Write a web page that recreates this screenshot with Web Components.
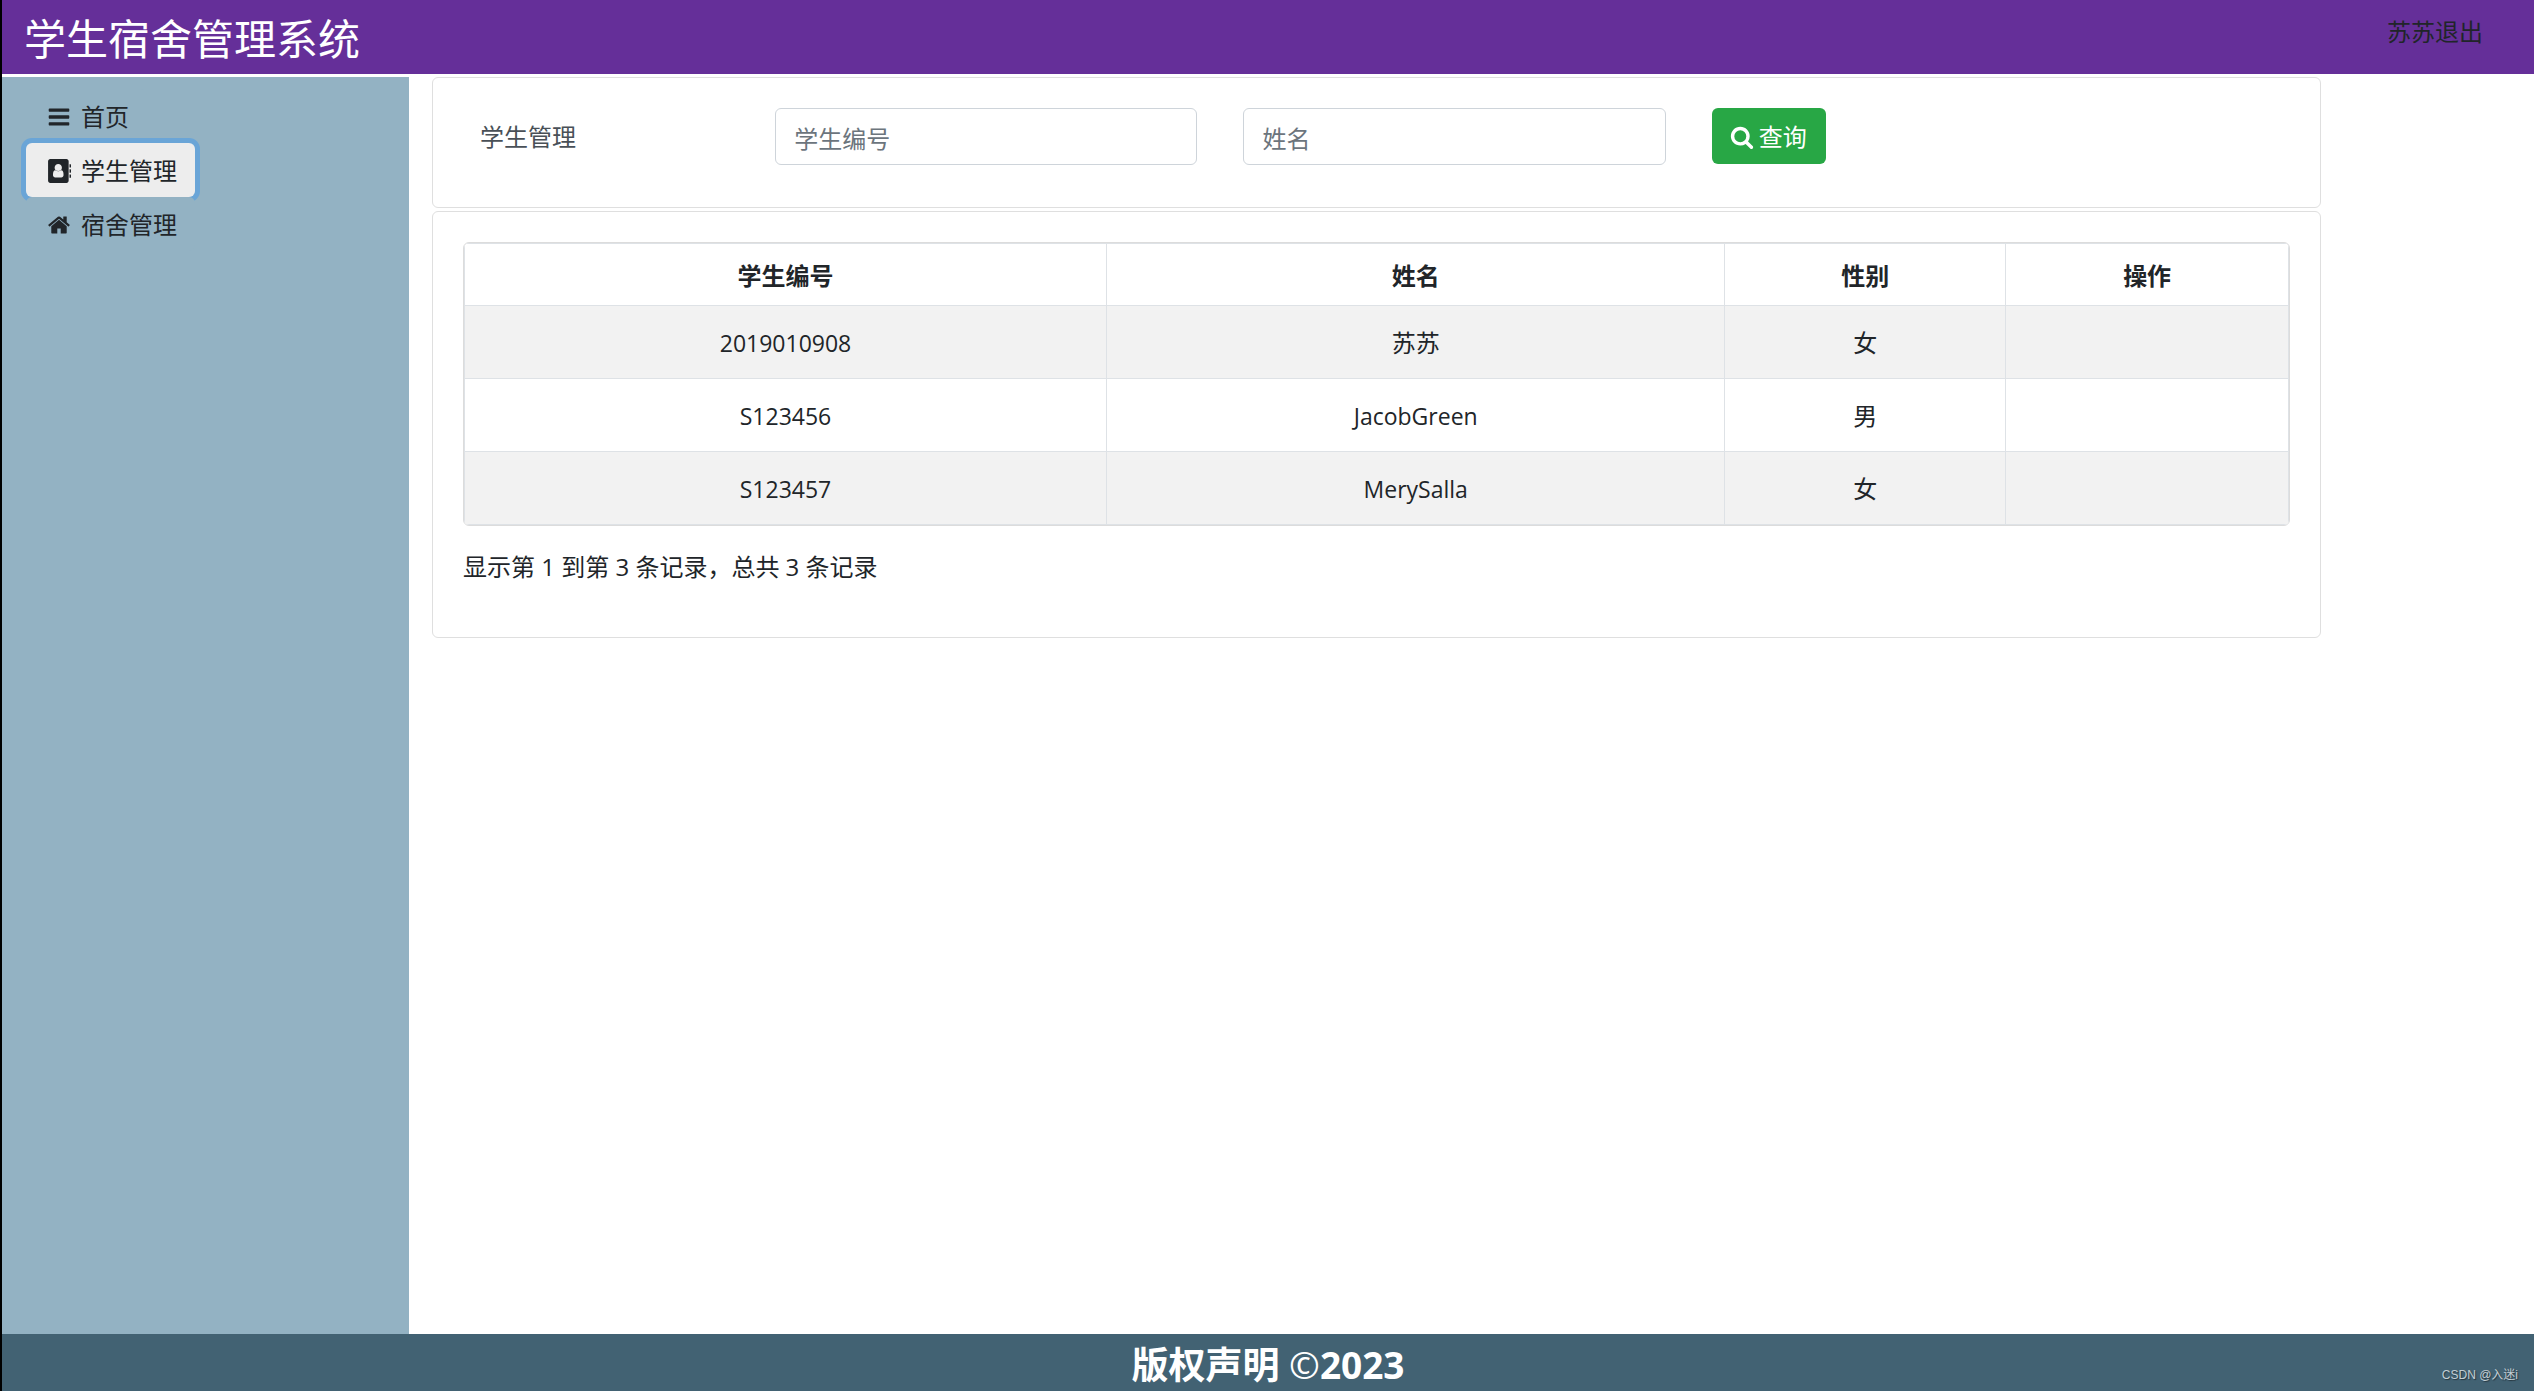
<!DOCTYPE html>
<html lang="zh-CN">
<head>
<meta charset="utf-8">
<title>学生宿舍管理系统</title>
<style>
  html, body { height: 100%; }
  body {
    margin: 0;
    box-sizing: border-box;
    border-left: 2px solid #000;
    font: 400 24px/36px "Open Sans", "Noto Sans CJK SC", sans-serif;
    color: #212529;
    background: #fff;
  }
</style>
</head>
<body>
<dorm-app></dorm-app>

<script>
const define = (name, html, init) => {
  const template = document.createElement('template');
  template.innerHTML = html;
  customElements.define(name, class extends HTMLElement {
    constructor() {
      super();
      this.attachShadow({ mode: 'open' }).append(template.content.cloneNode(true));
    }
    connectedCallback() { if (init) init(this, this.shadowRoot); }
  });
};

const icons = {
  bars: 'M1664 1344v128q0 26-19 45t-45 19h-1408q-26 0-45-19t-19-45v-128q0-26 19-45t45-19h1408q26 0 45 19t19 45zm0-512v128q0 26-19 45t-45 19h-1408q-26 0-45-19t-19-45v-128q0-26 19-45t45-19h1408q26 0 45 19t19 45zm0-512v128q0 26-19 45t-45 19h-1408q-26 0-45-19t-19-45v-128q0-26 19-45t45-19h1408q26 0 45 19t19 45z',
  book: 'M240 0h1216q66 0 113 47t47 113v1472q0 66-47 113t-113 47h-1216q-66 0-113-47t-47-113v-1472q0-66 47-113t113-47zM1235 1196q0-110-16-187t-64-130-124-53q-80 78-190 78t-190-78q-76 0-124 53t-64 130-16 187q0 86 49 136t118 50h454q69 0 118-50t49-136zM1113 648q0-113-80-193t-192-80-192 80-80 193 80 192 192 80 192-80 80-192zM1680 384h80q32 0 32 32v192q0 32-32 32h-80zM1680 768h80q32 0 32 32v192q0 32-32 32h-80zM1680 1152h80q32 0 32 32v192q0 32-32 32h-80z',
  home: 'M1472 992v480q0 26-19 45t-45 19h-384v-384h-256v384h-384q-26 0-45-19t-19-45v-480q0-1 .5-3t.5-3l575-474 575 474q1 2 1 6zm223-69l-62 74q-8 9-21 11h-3q-13 0-21-7l-692-577-692 577q-12 8-24 7-13-2-21-11l-62-74q-8-10-7-23.5t11-21.5l719-599q32-26 76-26t76 26l244 204v-195q0-14 9-23t23-9h192q14 0 23 9t9 23v408l219 182q10 8 11 21.5t-7 23.5z',
  search: 'M1216 832q0-185-131.5-316.5t-316.5-131.5-316.5 131.5-131.5 316.5 131.5 316.5 316.5 131.5 316.5-131.5 131.5-316.5zm512 832q0 52-38 90t-90 38q-54 0-90-38l-343-342q-179 124-399 124-143 0-273.5-55.5t-225-150-150-225-55.5-273.5 55.5-273.5 150-225 225-150 273.5-55.5 273.5 55.5 225 150 150 225 55.5 273.5q0 220-124 399l343 343q37 37 37 90z'
};

define('dorm-icon', `
  <style>
    :host { display: block; width: 24px; height: 24px; }
    svg { display: block; width: 100%; height: 100%; fill: currentColor; }
  </style>
  <svg viewBox="0 0 1792 1792" aria-hidden="true"><path fill-rule="evenodd"/></svg>`,
  (host, root) => {
    if (host.hasAttribute('name')) root.querySelector('path').setAttribute('d', icons[host.getAttribute('name')]);
  });

define('dorm-header', `
  <style>
    :host { display: flex; justify-content: space-between; align-items: flex-start;
      height: 74px; padding: 0 51px 0 22px; background: #652f99; }
    h1 { margin: 0; font-size: 42px; font-weight: inherit; line-height: 78px; color: #fff; }
    a { color: inherit; text-decoration: none; line-height: 64px; }
  </style>
  <h1><slot></slot></h1>
  <a href="#logout"><slot name="user"></slot></a>`);

define('dorm-nav-item', `
  <style>
    :host { display: block; }
    button { display: flex; align-items: center; gap: 10px; height: 54px; padding: 2px 18px 0 21px;
      border: 0; border-radius: 6px; background: #93b2c3; color: inherit; font: inherit; cursor: pointer; }
    :host([active]) button { background: #ededed; box-shadow: 0 0 0 5px #6aa5d7; }
  </style>
  <button type="button"><dorm-icon></dorm-icon><span><slot></slot></span></button>`,
  (host, root) => {
    const icon = root.querySelector('dorm-icon');
    icon.setAttribute('name', host.getAttribute('icon'));
    icon.connectedCallback();
  });

define('dorm-sidebar', `
  <style>
    :host { display: block; box-sizing: border-box; padding: 12px 24px; background: #93b2c3; }
    nav { display: flex; flex-direction: column; align-items: flex-start; }
    ::slotted(*) { position: relative; }
  </style>
  <nav aria-label="主菜单"><slot></slot></nav>`);

define('dorm-card', `
  <style>
    :host { display: block; box-sizing: border-box; border: 1px solid #dfdfdf; border-radius: 6px;
      padding: 30px; background: #fff; }
  </style>
  <slot></slot>`);

define('dorm-search', `
  <style>
    :host { display: block; margin: 0 -23px; }
    form { display: grid; grid-template-columns: 2fr 3fr 3fr 4fr; align-items: start; height: 69px; }
    label, .cell { padding: 0 23px; }
    label { padding-left: 40px; line-height: 58px; color: #495057; }
    input { display: block; box-sizing: border-box; width: 100%; height: 57px; padding: 4px 18px 0;
      border: 1px solid #ced4da; border-radius: 6px; background: #fff; color: #495057; font: inherit; outline: 0; }
    input::placeholder { color: #6c757d; opacity: 1; }
    button { display: flex; align-items: center; gap: 5px; height: 56px; padding: 2px 19px 0 18px;
      border: 0; border-radius: 6px; background: #28a745; color: #fff; font: inherit; cursor: pointer; }
  </style>
  <form onsubmit="return false">
    <label for="sid">学生管理</label>
    <div class="cell"><input id="sid" type="text" placeholder="学生编号"></div>
    <div class="cell"><input id="name" type="text" placeholder="姓名" aria-label="姓名"></div>
    <div class="cell"><button type="submit"><dorm-icon name="search"></dorm-icon>查询</button></div>
  </form>`);

define('dorm-table', `
  <style>
    :host { display: block; }
    .frame { border: 1px solid #dcdcdc; border-radius: 6px; overflow: hidden; }
    table { width: 100%; border-collapse: collapse; table-layout: fixed; border: 1px solid #dee2e6; }
    th, td { box-sizing: border-box; border: 1px solid #dee2e6; padding: 2px 0 0; text-align: center; }
    th { height: 62px; font-weight: 700; }
    td { height: 73px; }
    .latin { font-size: 23px; }
    tbody tr:nth-child(odd) { background: #f2f2f2; }
    .a { width: 35.2%; } .b { width: 33.9%; } .c { width: 15.4%; }
    p { margin: 23px 0 1px; }
  </style>
  <div class="frame">
    <table>
      <colgroup><col class="a"><col class="b"><col class="c"><col></colgroup>
      <thead><tr><th>学生编号</th><th>姓名</th><th>性别</th><th>操作</th></tr></thead>
      <tbody>
        <tr><td class="latin">2019010908</td><td>苏苏</td><td>女</td><td></td></tr>
        <tr><td class="latin">S123456</td><td class="latin">JacobGreen</td><td>男</td><td></td></tr>
        <tr><td class="latin">S123457</td><td class="latin">MerySalla</td><td>女</td><td></td></tr>
      </tbody>
    </table>
  </div>
  <p>显示第 1 到第 3 条记录，总共 3 条记录</p>`);

define('dorm-footer', `
  <style>
    :host { display: block; position: relative; height: 57px; background: #426273; color: #fff;
      text-align: center; font-size: 37px; font-weight: 700; line-height: 62px; }
    ::slotted(.sign) { font-weight: 400; }
    small { position: absolute; right: 16px; bottom: 7px; font: 12px/18px "Liberation Sans", "Noto Sans CJK SC", sans-serif;
      color: #c3ced4; text-shadow: 1px 1px 1px #25363f; }
  </style>
  <slot></slot><small><slot name="mark"></slot></small>`);

define('dorm-app', `
  <style>
    :host { display: flex; flex-direction: column; min-height: 100%; }
    .body { flex: 1; display: grid; grid-template-columns: 407fr 1889fr 190fr; column-gap: 23px; margin-top: 3px; }
    main { display: flex; flex-direction: column; gap: 3px; }
    .list { padding-bottom: 51px; }
  </style>
  <dorm-header>学生宿舍管理系统<span slot="user">苏苏退出</span></dorm-header>
  <div class="body">
    <dorm-sidebar>
      <dorm-nav-item icon="bars">首页</dorm-nav-item>
      <dorm-nav-item icon="book" active>学生管理</dorm-nav-item>
      <dorm-nav-item icon="home">宿舍管理</dorm-nav-item>
    </dorm-sidebar>
    <main>
      <dorm-card><dorm-search></dorm-search></dorm-card>
      <dorm-card class="list"><dorm-table></dorm-table></dorm-card>
    </main>
  </div>
  <dorm-footer>版权声明 <span class="sign">©</span>2023<span slot="mark">CSDN @入迷i</span></dorm-footer>`);
</script>
</body>
</html>
